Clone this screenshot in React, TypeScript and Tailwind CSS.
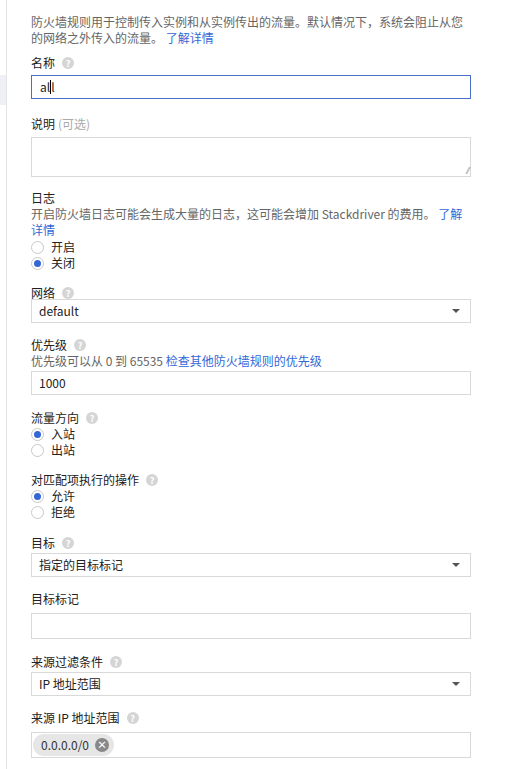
import React from "react";

const Help = () => (
  <span className="inline-flex items-center justify-center w-[12px] h-[12px] rounded-full bg-[#d5d5d5] text-white text-[9px] font-bold leading-none ml-[7px]">?</span>
);

const Radio = ({ checked, label }: { checked?: boolean; label: string }) => (
  <div className="flex items-center h-[16px] overflow-hidden">
    <span className="w-[13px] h-[13px] shrink-0 rounded-full border border-[#c8c8c8] bg-white flex items-center justify-center mr-[7px]">
      {checked && <span className="w-[7px] h-[7px] rounded-full bg-[#3367d6]" />}
    </span>
    <span className="leading-[16px]">{label}</span>
  </div>
);

const Label = ({ children }: { children: React.ReactNode }) => (
  <div className="flex items-center h-[16px] overflow-visible">{children}</div>
);

const Select = ({ value }: { value: string }) => (
  <div className="h-[24px] border border-[#d9d9d9] bg-white flex items-center justify-between pl-[7px] pr-[10px]">
    <span>{value}</span>
    <span className="w-0 h-0 border-l-[4px] border-r-[4px] border-t-[4px] border-l-transparent border-r-transparent border-t-[#555]" />
  </div>
);

export default function App() {
  return (
    <div className="w-[516px] h-[769px] bg-white relative overflow-hidden text-[12px] leading-[16px] text-[#212121]" style={{ fontFamily: '"Noto Sans CJK SC", "Noto Sans", sans-serif' }}>
      <div className="absolute left-0 top-[75px] w-[6px] h-[30px] bg-[#eef0f6]" />
      <div className="absolute left-[6px] top-0 w-px h-full bg-[#e4e4e4]" />
      <div className="pl-[31px] w-[471px] pt-[14px]">
        <p className="text-[#666]">防火墙规则用于控制传入实例和从实例传出的流量。默认情况下，系统会阻止从您的网络之外传入的流量。 <span className="text-[#3367d6]">了解详情</span></p>

        <div className="mt-[9px]"><Label>名称<Help /></Label></div>
        <div className="mt-[4px] h-[24px] border border-[#4a6fc6] flex items-center pl-[8px]">al<span className="w-px h-[14px] bg-black" />l</div>

        <div className="mt-[17px]"><Label>说明 <span className="text-[#aaa] ml-[3px]">(可选)</span></Label></div>
        <div className="mt-[5px] h-[40px] border border-[#d9d9d9] relative">
          <span className="absolute right-[1px] bottom-[1px] text-[8px] leading-none text-[#999]">⁄⁄</span>
        </div>

        <div className="mt-[13px]"><Label>日志</Label></div>
        <p className="text-[#666] h-[32px]">开启防火墙日志可能会生成大量的日志，这可能会增加 Stackdriver 的费用。 <span className="text-[#3367d6]">了解详情</span></p>
        <div className="mt-[1px]"><Radio label="开启" /><Radio checked label="关闭" /></div>

        <div className="mt-[14px]"><Label>网络<Help /></Label></div>
        <div className="mt-[-2px]"><Select value="default" /></div>

        <div className="mt-[14px]"><Label>优先级<Help /></Label></div>
        <div className="text-[#666] h-[16px]">优先级可以从 0 到 65535 <span className="text-[#3367d6]">检查其他防火墙规则的优先级</span></div>
        <div className="mt-[2px] h-[24px] border border-[#d9d9d9] flex items-center pl-[7px]">1000</div>

        <div className="mt-[15px]"><Label>流量方向<Help /></Label></div>
        <Radio checked label="入站" /><Radio label="出站" />

        <div className="mt-[14px]"><Label>对匹配项执行的操作<Help /></Label></div>
        <Radio checked label="允许" /><Radio label="拒绝" />

        <div className="mt-[15px]"><Label>目标<Help /></Label></div>
        <div className="mt-[2px]"><Select value="指定的目标标记" /></div>

        <div className="mt-[14px]"><Label>目标标记</Label></div>
        <div className="mt-[6px] h-[26px] border border-[#d9d9d9]" />

        <div className="mt-[15px]"><Label>来源过滤条件<Help /></Label></div>
        <div className="mt-[2px]"><Select value="IP 地址范围" /></div>

        <div className="mt-[14px]"><Label>来源 IP 地址范围<Help /></Label></div>
        <div className="mt-[6px] h-[26px] border border-[#d9d9d9] flex items-center pl-[1px]">
          <span className="h-[22px] rounded-full bg-[#e6e6e6] flex items-center pl-[8px] pr-[5px] text-[#333]">
            0.0.0.0/0
            <span className="ml-[6px] w-[14px] h-[14px] rounded-full bg-[#888] text-white text-[10px] leading-none flex items-center justify-center font-bold">×</span>
          </span>
        </div>
      </div>
    </div>
  );
}
